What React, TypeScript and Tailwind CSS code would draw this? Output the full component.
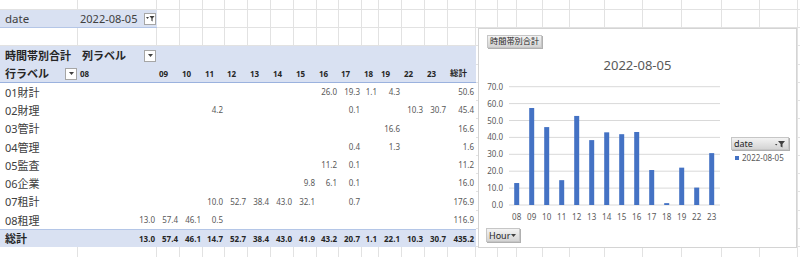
import React from 'react';

// sheet columns A..AA, widths taken from the screenshot
const COLS =
  'grid grid-cols-[78px_79px_23px_23px_22px_23px_23px_23px_23px_22px_23px_17px_23px_23px_23px_28px_22px_19px_26px_27px_35px_38px_39px_40px_38px_38px_20px]';
const LINE = 'border-r border-b border-[#e2e2e2]';
const HEAD = 'bg-[#d9e1f2]';

const HOURS = ['08', '09', '10', '11', '12', '13', '14', '15', '16', '17', '18', '19', '22', '23'];
const TOTALS = ['13.0', '57.4', '46.1', '14.7', '52.7', '38.4', '43.0', '41.9', '43.2', '20.7', '1.1', '22.1', '10.3', '30.7', '435.2'];

const ROWS: { label: string; h: string; cells: Record<number, string> }[] = [
  { label: '01財計', h: 'h-[18px]', cells: { 8: '26.0', 9: '19.3', 10: '1.1', 11: '4.3', 14: '50.6' } },
  { label: '02財理', h: 'h-[18px]', cells: { 3: '4.2', 9: '0.1', 12: '10.3', 13: '30.7', 14: '45.4' } },
  { label: '03管計', h: 'h-[19px]', cells: { 11: '16.6', 14: '16.6' } },
  { label: '04管理', h: 'h-[18px]', cells: { 9: '0.4', 11: '1.3', 14: '1.6' } },
  { label: '05監査', h: 'h-[18px]', cells: { 8: '11.2', 9: '0.1', 14: '11.2' } },
  { label: '06企業', h: 'h-[18px]', cells: { 7: '9.8', 8: '6.1', 9: '0.1', 14: '16.0' } },
  { label: '07租計', h: 'h-[19px]', cells: { 3: '10.0', 4: '52.7', 5: '38.4', 6: '43.0', 7: '32.1', 9: '0.7', 14: '176.9' } },
  { label: '08租理', h: 'h-[18px]', cells: { 0: '13.0', 1: '57.4', 2: '46.1', 3: '0.5', 14: '116.9' } },
];

const BARS = [13.0, 57.4, 46.1, 14.7, 52.7, 38.4, 43.0, 41.9, 43.2, 20.7, 1.1, 22.1, 10.3, 30.7];

const Blank = ({ n }: { n: number }) => (
  <>
    {Array.from({ length: n }).map((_, i) => (
      <div key={i} className={LINE} />
    ))}
  </>
);

const DropButton = ({ filter = false }: { filter?: boolean }) => (
  <div className="w-[12px] h-[12px] border border-[#a6a6a6] bg-white flex items-center justify-center">
    {filter ? (
      <svg width="9" height="7" viewBox="0 0 9 7">
        <path d="M0 2h3L1.5 4z" fill="#404040" />
        <path d="M3.5 1h5L6.6 3.4V6.5L5.4 5.8V3.4z" fill="#404040" />
      </svg>
    ) : (
      <svg width="5" height="3" viewBox="0 0 5 3">
        <path d="M0 0h5L2.5 3z" fill="#404040" />
      </svg>
    )}
  </div>
);

const FieldButton = ({ children, className = '' }: { children: React.ReactNode; className?: string }) => (
  <div
    className={`flex items-center whitespace-nowrap overflow-hidden border border-[#c6c6c6] bg-gradient-to-b from-[#f3f3f3] to-[#d4d4d4] text-[#262626] leading-none shadow-[1px_1px_0_#b0b0b0] ${className}`}
  >
    {children}
  </div>
);

const Chart = () => {
  const base = 126;
  const step = 16.9;
  return (
    <div className="absolute left-[478px] top-[28px] w-[319px] h-[220px] border border-[#d4d4d4] bg-white flex flex-col">
      <FieldButton className="ml-[8px] mt-[6px] w-[55px] h-[13px] px-[2px] text-[8.2px]">時間帯別合計</FieldButton>
      <div className="mt-[10px] h-[14px] text-center text-[13px] leading-[14px] text-[#595959]">2022-08-05</div>
      <div className="mt-[7px] flex">
        <svg width="245" height="147" viewBox="0 0 245 147">
          {Array.from({ length: 8 }).map((_, k) => {
            const y = base - k * step;
            return (
              <g key={k}>
                <line x1="30" x2="241" y1={y} y2={y} stroke="#d9d9d9" strokeWidth="1" />
                <text x="24" y={y + 3} textAnchor="end" fontSize="8" fill="#595959" fontFamily="Noto Sans, sans-serif">
                  {(k * 10).toFixed(1)}
                </text>
              </g>
            );
          })}
          {BARS.map((v, i) => {
            const cx = 37.7 + i * 15;
            const h = v * 1.69;
            return (
              <g key={i}>
                <rect x={cx - 2.5} y={base - h} width="5" height={h} fill="#4472c4" />
                <text x={cx} y="140.5" textAnchor="middle" fontSize="8" fill="#595959" fontFamily="Noto Sans, sans-serif">
                  {HOURS[i]}
                </text>
              </g>
            );
          })}
        </svg>
        <div className="ml-[7px] mt-[58px] flex flex-col">
          <FieldButton className="w-[58px] h-[13px] pl-[2px] pr-[3px] text-[9px] justify-between">
            <span>date</span>
            <svg width="10" height="8" viewBox="0 0 10 8">
              <path d="M0 4h2.4L1.2 5.6z" fill="#404040" />
              <path d="M3 1h7L7.5 4v3.6L5.6 6.6V4z" fill="#404040" />
            </svg>
          </FieldButton>
          <div className="mt-[4px] ml-[4px] flex items-center gap-[3px] text-[8px] leading-none text-[#595959]">
            <span className="w-[4px] h-[4px] bg-[#4472c4]" />
            <span>2022-08-05</span>
          </div>
        </div>
      </div>
      <FieldButton className="ml-[7px] mt-[2px] w-[34px] h-[14px] pl-[2px] pr-[3px] text-[9px] justify-between">
        <span>Hour</span>
        <svg width="5" height="3" viewBox="0 0 5 3">
          <path d="M0 0h5L2.5 3z" fill="#404040" />
        </svg>
      </FieldButton>
    </div>
  );
};

export default function App() {
  const val = 'flex items-center justify-end pr-[2px] text-[8px] leading-none text-[#595959]';
  return (
    <div className="relative w-[800px] h-[257px] overflow-hidden bg-white font-['Noto_Sans','Noto_Sans_CJK_JP',sans-serif] text-[#262626]">
      <div className="-mt-[8px]">
        {/* empty top row */}
        <div className={`${COLS} h-[18px]`}>
          <Blank n={27} />
        </div>

        {/* report filter */}
        <div className={`${COLS} h-[18px]`}>
          <div className={`${HEAD} border-b border-[#b4c6e7] flex items-center pl-[5px] text-[11.5px] leading-none text-[#404040]`}>date</div>
          <div className={`${HEAD} border-b border-[#b4c6e7] flex items-center justify-between pl-[2px] pr-[1px] text-[11px] leading-none text-[#404040]`}>
            <span>2022-08-05</span>
            <DropButton filter />
          </div>
          <Blank n={25} />
        </div>

        <div className={`${COLS} h-[18px]`}>
          <Blank n={27} />
        </div>

        {/* pivot header */}
        <div className={`${COLS} h-[19px]`}>
          <div className={`${HEAD} flex items-center pl-[5px] text-[11px] font-bold leading-none`}>時間帯別合計</div>
          <div className={`${HEAD} flex items-center justify-between pl-[4px] pr-[1px] text-[11px] font-bold leading-none`}>
            <span>列ラベル</span>
            <DropButton />
          </div>
          {Array.from({ length: 14 }).map((_, i) => (
            <div key={i} className={HEAD} />
          ))}
          <Blank n={11} />
        </div>
        <div className={`${COLS} h-[18px]`}>
          <div className={`${HEAD} border-b border-[#9bb2de] flex items-center justify-between pl-[5px] pr-[1px] text-[11px] font-bold leading-none`}>
            <span>行ラベル</span>
            <DropButton />
          </div>
          {HOURS.map((h) => (
            <div key={h} className={`${HEAD} border-b border-[#9bb2de] flex items-center pl-[2px] text-[8px] font-bold leading-none`}>
              {h}
            </div>
          ))}
          <div className={`${HEAD} border-b border-[#9bb2de] flex items-center pl-[2px] text-[8.5px] font-bold leading-none`}>総計</div>
          <Blank n={11} />
        </div>

        {/* body */}
        {ROWS.map((r) => (
          <div key={r.label} className={`${COLS} ${r.h}`}>
            <div className="flex items-center pl-[5px] text-[11px] leading-none text-[#404040]">{r.label}</div>
            {Array.from({ length: 15 }).map((_, i) => (
              <div key={i} className={val}>
                {r.cells[i] ?? ''}
              </div>
            ))}
            <Blank n={11} />
          </div>
        ))}

        {/* grand total */}
        <div className={`${COLS} h-[18px]`}>
          <div className={`${HEAD} border-t border-[#b4c6e7] flex items-center pl-[5px] text-[11px] font-bold leading-none`}>総計</div>
          {TOTALS.map((t, i) => (
            <div key={i} className={`${HEAD} border-t border-[#b4c6e7] flex items-center justify-end pr-[2px] text-[8px] font-bold leading-none`}>
              {t}
            </div>
          ))}
          <Blank n={11} />
        </div>

        <div className={`${COLS} h-[18px]`}>
          <Blank n={27} />
        </div>
      </div>

      <Chart />
    </div>
  );
}
